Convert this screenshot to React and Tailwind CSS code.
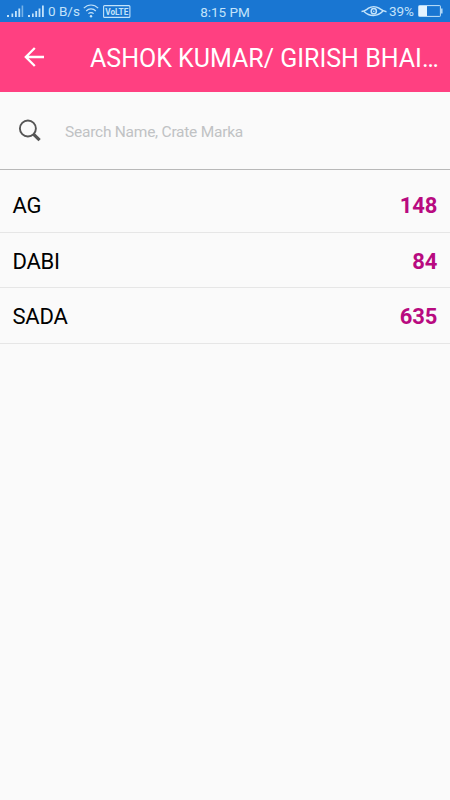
const crates = [
  { name: 'AG', count: 148 },
  { name: 'DABI', count: 84 },
  { name: 'SADA', count: 635 },
];

function Signal() {
  return (
    <svg className="h-3.5 w-[17px] shrink-0" viewBox="0 0 17 14" fill="currentColor">
      <path d="M0 11h2v2H0zM4.500 9.500h1.700V13H4.500zM8 7h1.800v6H8zM11.400 4.500h1.800V13h-1.800z" />
      <path d="M14.600 1.500h1.600V13h-1.600z" opacity="0.55" />
    </svg>
  );
}

function SignalFull() {
  return (
    <svg className="h-3.5 w-[17px] shrink-0" viewBox="0 0 17 14" fill="currentColor">
      <path d="M0 11h2v2H0zM4 9.500h1.700V13H4zM7.300 7h1.800v6H7.300zM10.600 4.500h1.800V13h-1.800zM14 1.500h1.800V13H14z" />
    </svg>
  );
}

function StatusBar() {
  return (
    <div className="grid h-[22px] grid-cols-[1fr_auto_1fr] items-center bg-[#1976d2] px-[7px] text-[13.5px] leading-5 text-[#c3e3fa]">
      <div className="flex items-center">
        <Signal />
        <span className="w-1 shrink-0" />
        <SignalFull />
        <span className="ml-[3px] whitespace-nowrap">0 B/s</span>
        <svg className="ml-[3px] h-3.5 w-4 shrink-0" viewBox="0 0 16 14" fill="none" stroke="currentColor" strokeWidth="1.200">
          <path d="M.8 4.200C5-.1 11-.1 15.200 4.200M3.200 7c2.700-2.800 6.900-2.800 9.600 0M5.400 9.700c1.500-1.500 3.700-1.500 5.200 0" />
          <circle cx="8" cy="12.200" r="1.200" fill="currentColor" stroke="none" />
        </svg>
        <svg className="ml-1 h-[13px] w-7 shrink-0" viewBox="0 0 28 13">
          <rect x="0.600" y="0.600" width="26.300" height="11.800" rx="1" fill="none" stroke="currentColor" strokeWidth="1.100" />
          <text x="2.300" y="10" fill="currentColor" fontSize="9.500" fontWeight="700" textLength="23" lengthAdjust="spacingAndGlyphs">
            VoLTE
          </text>
        </svg>
      </div>
      <span className="pt-px">8:15 PM</span>
      <div className="flex items-center justify-end">
        <svg className="h-3.5 w-[26px]" viewBox="0 0 26 14" fill="none" stroke="currentColor" strokeWidth="1.500">
          <path d="M.5 7.500C3.500 7.500 5 5.800 7.500 4.200C10.500 2.200 15 2.200 18 4.200C20.500 6 22 7.300 25.500 7.800" />
          <path d="M3 7.500c5.500 5.400 13.500 5.400 19-.4" />
          <circle cx="12.800" cy="7.200" r="2.600" />
          <circle cx="12.800" cy="7.200" r=".8" fill="currentColor" stroke="none" />
        </svg>
        <span className="ml-[2px]">39%</span>
        <svg className="ml-1 h-3 w-[25px]" viewBox="0 0 25 12" fill="none" stroke="currentColor">
          <rect x="0.600" y="0.600" width="21.800" height="10.800" rx="0.600" strokeWidth="1" />
          <path d="M1 1h8v10H1z" fill="#e3f3ff" stroke="none" />
          <path d="M23.800 3.500v5" strokeWidth="1.400" />
        </svg>
      </div>
    </div>
  );
}

function Toolbar() {
  return (
    <header className="flex h-[70px] items-center bg-[#ff4081] text-white">
      <svg className="ml-6 h-5 w-5 shrink-0" viewBox="0 0 20 20" fill="none" stroke="currentColor" strokeWidth="2.300">
        <path d="M20 10H2M10.800 1L1.800 10l9 9" />
      </svg>
      <h1 className="ml-[46px] mt-1 whitespace-nowrap text-[25px] leading-[30px]">ASHOK KUMAR/ GIRISH BHAI…</h1>
    </header>
  );
}

function SearchBar() {
  return (
    <div className="flex h-[78px] items-center border-b border-[#b8b8b8]">
      <svg className="ml-[18px] mt-px h-6 w-6 shrink-0" viewBox="0 0 24 24" fill="none" stroke="#555">
        <circle cx="9.900" cy="9.500" r="8" strokeWidth="1.900" />
        <path d="M15.200 14.800l6.400 6.400" strokeWidth="3.200" />
      </svg>
      <input
        type="text"
        placeholder="Search Name, Crate Marka"
        className="ml-[23px] mt-1 flex-1 bg-transparent text-[15.500px] tracking-[-0.24px] text-black outline-none placeholder:text-[#c0c2c4]"
      />
    </div>
  );
}

export default function App() {
  return (
    <div className="min-h-screen w-full overflow-hidden bg-[#fafafa] font-['Roboto',sans-serif]">
      <StatusBar />
      <Toolbar />
      <SearchBar />
      <ul className="pt-[7px]">
        {crates.map((crate) => (
          <li key={crate.name} className="flex h-[55.500px] items-center justify-between border-b border-[#e6e6e6] px-[12.500px] pt-[3px] text-[22px]">
            <span className="tracking-[-0.25px] text-black">{crate.name}</span>
            <span className="font-bold text-[#b80a80]">{crate.count}</span>
          </li>
        ))}
      </ul>
    </div>
  );
}
